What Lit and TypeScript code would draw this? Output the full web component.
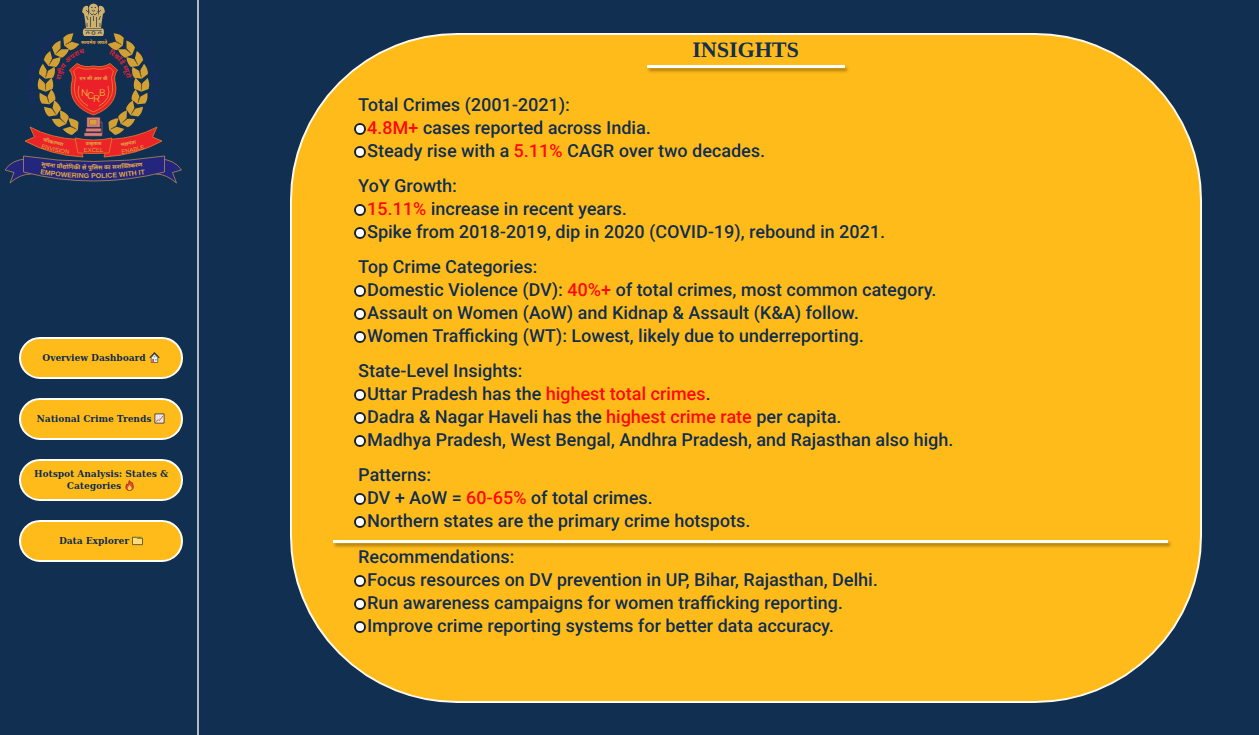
import { LitElement, html, css, svg } from "lit";
import { customElement } from "lit/decorators.js";

type Part = string | { hot: string };
interface Section { title: string; items: Part[][]; }

const hot = (text: string) => ({ hot: text });

const FINDINGS: Section[] = [
  { title: "Total Crimes (2001-2021):", items: [
    [hot("4.8M+"), " cases reported across India."],
    ["Steady rise with a ", hot("5.11%"), " CAGR over two decades."],
  ] },
  { title: "YoY Growth:", items: [
    [hot("15.11%"), " increase in recent years."],
    ["Spike from 2018-2019, dip in 2020 (COVID-19), rebound in 2021."],
  ] },
  { title: "Top Crime Categories:", items: [
    ["Domestic Violence (DV): ", hot("40%+"), " of total crimes, most common category."],
    ["Assault on Women (AoW) and Kidnap & Assault (K&A) follow."],
    ["Women Trafficking (WT): Lowest, likely due to underreporting."],
  ] },
  { title: "State-Level Insights:", items: [
    ["Uttar Pradesh has the ", hot("highest total crimes"), "."],
    ["Dadra & Nagar Haveli has the ", hot("highest crime rate"), " per capita."],
    ["Madhya Pradesh, West Bengal, Andhra Pradesh, and Rajasthan also high."],
  ] },
  { title: "Patterns:", items: [
    ["DV + AoW = ", hot("60-65%"), " of total crimes."],
    ["Northern states are the primary crime hotspots."],
  ] },
];

const ADVICE: Section = { title: "Recommendations:", items: [
  ["Focus resources on DV prevention in UP, Bihar, Rajasthan, Delhi."],
  ["Run awareness campaigns for women trafficking reporting."],
  ["Improve crime reporting systems for better data accuracy."],
] };

const house = html`<svg class="icon" viewBox="0 0 12 12" aria-hidden="true">
  <path d="M2.5 6v5.5h7V6L6 2z" fill="#f1f1ee" stroke="#333" stroke-width=".7"/>
  <path d="M.8 6.4 6 1l5.200 5.400" fill="none" stroke="#333" stroke-width="1.300"/>
  <path d="M3.500 7.500h2v4h-2z" fill="#e0483e"/><path d="M6.700 7.500h1.800v1.800H6.700z" fill="#4fc3e8"/>
  <path d="M5.200 4.300h1.600v1.600H5.200z" fill="#4fc3e8"/></svg>`;

const chart = html`<svg class="icon" viewBox="0 0 12 12" aria-hidden="true">
  <path d="M1 1h10v10H1z" fill="#f7f3ee" stroke="#3c3c3c"/>
  <path d="M3.500 1.500v9M6 1.500v9M8.500 1.500v9M1.500 3.500h9M1.500 6h9M1.500 8.500h9" stroke="#d5ccc4" stroke-width=".5"/>
  <path d="M2 9.500 4.500 7.500 6 8l4-5" fill="none" stroke="#e2483d"/></svg>`;

const flame = html`<svg class="icon" viewBox="0 0 12 12" aria-hidden="true">
  <path d="M5.500.6C7.600 2.500 9 3.200 9.400 3.200 9 4.500 10.500 6 10.200 8c-.3 2.200-1.700 3.500-4 3.500S2 10 2 7.800C2 6 2.700 5.300 3 4.200l1 1C4.600 3.800 5.700 2.500 5.500.6z" fill="#f2452f" stroke="#4a1a12" stroke-width=".6"/>
  <path d="M6.200 5c0 1.500 2.300 2.300 2.200 4-.1 1.400-1 2.100-2.200 2.100S4 10.300 4 9c0-1.600 1.800-2.200 2.200-4z" fill="#ffd23e"/></svg>`;

const folder = html`<svg class="icon" viewBox="0 0 12 12" aria-hidden="true">
  <path d="M.5 10.500V2.500H5l.8 1h5.700v7z" fill="#ffdc7a" stroke="#3a3018" stroke-width=".8"/>
  <path d="M5.600 2h4.600v1H6z" fill="#3e8f4c"/></svg>`;

const PAGES = [
  { label: "Overview Dashboard", icon: house },
  { label: "National Crime Trends", icon: chart },
  { label: "Hotspot Analysis: States & Categories", icon: flame },
  { label: "Data Explorer", icon: folder },
];

/* One side of the laurel: nine leaf pairs along an arc around the shield. */
const laurel = Array.from({ length: 9 }, (_, i) => {
  const turn = -29 - i * 15.5;
  return svg`<g transform="rotate(${turn} 93.500 84) translate(93.500 36) rotate(90) scale(1.100 1)">
    <path d="M0 7 L-6.500 4 Q-8-1-5.500-7 L-.6-1.500Z M0 7 L6.500 4 Q8-1 5.500-7 L.6-1.500Z" fill="#d3a033"/>
    <path d="M0 5V-1" stroke="#7b6631" stroke-width=".7"/></g>`;
});

const lions = svg`<g fill="#cfb06c">
  <path d="M90 5q3.500-3 7 0l1.500 3-1 4 2 5v11H87.500V17l2-5-1-4z"/>
  <path d="M88 6q-3-1-5 2l-1 4 2 2 1 6 1 8h3zM99 6q3-1 5 2l1 4-2 2-1 6-1 8h-3z"/>
  <path d="M84 28.500h19q2 3 0 7.500H84q-2.500-4 0-7.500z"/></g>
  <g fill="none" stroke="#13304f" stroke-width=".7">
  <path d="M91 7.500h1.500M94.500 7.500H96M92 10.500q1.500 1 3 0M90 13l2 2 1.500-1 1.500 1 2-2M90.500 17v10M93.500 16v5M96.500 17v10M86 10l2 2M101 10l-2 2M86.500 16l1.500 4M100.500 16 99 20M87 23v4M100 23v4"/>
  <path d="M85 30.500h17" stroke-width=".5"/><circle cx="93.500" cy="33" r="1.600"/><path d="M86 34l1-2 2 0 0 2M98 34l1-2 2 0 0 2"/></g>`;

const crest = html`<svg class="crest" viewBox="0 0 186 190" role="img" aria-label="National Crime Records Bureau">
  <defs>
    <path id="outer-left" d="M36.100 102.500A60 60 0 0 1 69 30.200"/>
    <path id="outer-right" d="M123.500 33A60 60 0 0 1 150 105"/>
    <path id="inner-left" d="M60.500 80A33 33 0 0 1 84 53"/>
    <path id="inner-right" d="M108.500 54A33 33 0 0 1 125 94"/>
    <path id="banner-hindi" d="M41 166Q94 174 160 164"/>
    <path id="banner-latin" d="M40 174Q94 183 160 172"/>
    <path id="left-hindi" d="M43 141Q56 145.500 76 148"/>
    <path id="left-latin" d="M41 148Q54 152 76 155"/>
    <path id="right-hindi" d="M121 146Q133 145 148 140"/>
    <path id="right-latin" d="M122 154Q134 152 150 147"/>
  </defs>
  ${lions}
  <g class="gold mid"><text x="94" y="44" font-size="5" font-weight="700">सत्यमेव जयते</text></g>
  <g>${laurel}</g>
  <g transform="translate(187 0) scale(-1 1)">${laurel}</g>
  <g fill="#20286e">
    <text font-size="9"><textPath href="#outer-left">NATIONAL CRIME</textPath></text>
    <text font-size="8"><textPath href="#outer-right">RECORDS BUREAU</textPath></text>
  </g>
  <g fill="#d3243a" font-weight="700" font-size="7">
    <text><textPath href="#inner-left">राष्ट्रीय अपराध</textPath></text>
    <text><textPath href="#inner-right">रिकॉर्ड ब्यूरो</textPath></text>
  </g>
  <path d="M93.500 66Q84 68 77 63.500L69.500 70Q74 76 71.500 84C69 101 80 110 93.500 115C107 110 118 101 115.500 84Q113 76 117.500 70L110 63.500Q103 68 93.500 66Z" fill="#ec2028" stroke="#d98a2b" stroke-width=".8"/>
  <path d="M93.500 68.500Q84 70.500 78 67L73.500 71Q77 77 74.500 85C73 99 82 107 93.500 112C105 107 114 99 112.500 85Q110 77 113.500 71L109 67Q103 70.500 93.500 68.500Z" fill="none" stroke="#e8912e" stroke-width=".7"/>
  <path d="M79 86q-4 13 9 20M108 86q4 13-9 20" fill="none" stroke="#e8912e" stroke-width=".9"/>
  <g class="gold mid"><text x="93.500" y="80" font-size="5" font-weight="700">एन सी आर बी</text></g>
  <g class="monogram"><text x="81" y="96">N</text><text x="87" y="99">C</text><text x="93" y="102">R</text><text x="99" y="96">B</text></g>
  <g fill="#d88079" stroke="#9d4f55" stroke-width=".5">
    <path d="M87 117.500h13v9.500H87zM86 128.500h15v3H86zM84.500 133h17.500v3H84.500z"/>
    <path d="M89.500 119.500h7.500v5.500h-7.500z" fill="#d4a23a"/><path d="M100 122h2v12" fill="none" stroke="#d88079"/></g>
  <g stroke="#e1802c" stroke-width=".8" fill="#ec2427">
    <path d="M30 127Q50 138 78 139.500L83 157Q50 155 25 141L34.500 137Z"/>
    <path d="M157 127Q137 138 109 139.500L104 157Q137 155 162 141L152.500 137Z"/>
    <path d="M75 138Q93.500 142 112 138L109 153Q93.500 154 78 153Z"/></g>
  <g stroke="#b48a58" stroke-width=".8" fill="#23267c">
    <path d="M28 159Q12 159 5 170L14 172.500 10 183Q20 174 31 174Z"/>
    <path d="M159 159Q174 159 181.500 170L172.500 172.500 176.500 183Q166 174 156 174Z"/>
    <path d="M23.500 156Q93 167 164.500 156V172Q93 190 23.500 172Z"/></g>
  <g class="gold">
    <text font-size="6" font-weight="700"><textPath href="#banner-hindi">सूचना प्रौद्योगिकी से पुलिस का सशक्तिकरण</textPath></text>
    <text font-size="7" font-weight="700"><textPath href="#banner-latin">EMPOWERING POLICE WITH IT</textPath></text>
  </g>
  <g class="gold">
    <g font-size="5" font-weight="700"><text><textPath href="#left-hindi">परिकल्पना</textPath></text><text><textPath href="#right-hindi">सक्षमता</textPath></text>
    <text class="mid" x="93.500" y="144.500">उत्कृष्टता</text></g>
    <g font-size="6"><text><textPath href="#left-latin">ENVISION</textPath></text><text><textPath href="#right-latin">ENABLE</textPath></text>
    <text class="mid" x="93.500" y="151.500">EXCEL</text></g>
  </g>
</svg>`;

@customElement("app-root")
export class AppRoot extends LitElement {
  static styles = css`
    :host { display: flex; min-height: 100vh; background: #112f50; color: #12304f; text-rendering: geometricPrecision; }
    .sidebar { box-sizing: border-box; flex: none; width: 199px; border-right: 2px solid #b4bac2; }
    .crest { display: block; width: 186px; height: 190px; font-family: "Liberation Sans", "Noto Sans Devanagari", sans-serif; }
    .gold { fill: #dca548; }
    .mid { text-anchor: middle; }
    .monogram { fill: #e9a33a; font-family: "Liberation Sans Narrow", "Liberation Sans", sans-serif; font-size: 10px; }
    .nav { display: flex; flex-direction: column; gap: 19px; padding: 147px 14px 24px 19px; }
    .page {
      box-sizing: border-box; height: 42px; padding: 0 10px 1px; border: 2px solid #fff; border-radius: 21px;
      background: #ffbb1a; color: #12304f; font: 700 9px/12px "DejaVu Serif", serif; text-align: center; cursor: pointer;
    }
    .icon { width: 11px; height: 11px; vertical-align: -2px; }
    .main { flex: 1; display: flex; padding: 33px 57px 32px 91px; }
    .panel {
      box-sizing: border-box; flex: 1; border: 2px solid #fffaf0; border-radius: 167px; background: #ffbb1a;
      padding: 2px 32px 60px 41px; font: 500 18px/23px Roboto, sans-serif;
    }
    .top { padding-right: 10px; }
    .title { margin: 0; text-align: center; font: 700 22px/25px "Liberation Serif", serif; }
    .bar { height: 3px; border: 0; background: #fff; box-shadow: 2px 3px 3px rgba(90, 60, 0, .5); }
    .short { width: 198px; margin: 3px auto 26px; }
    .long { margin: 7px 0 3px; }
    .findings { display: flex; flex-direction: column; gap: 12px; }
    .section { padding-left: 21px; }
    .heading { margin: 0; padding-left: 4px; font: inherit; }
    .list { margin: 0; padding: 0; list-style: none; }
    .item { display: flex; align-items: center; gap: 1px; }
    .dot { box-sizing: border-box; flex: none; width: 12px; height: 12px; border: 2px solid #16202c; border-radius: 50%; background: #fff; }
    .hot { color: #ff0a0a; }
  `;

  private section(s: Section) {
    return html`<section class="section">
      <h2 class="heading">${s.title}</h2>
      <ul class="list">${s.items.map((parts) => html`<li class="item"><span class="dot"></span><span>${parts.map((p) =>
        typeof p === "string" ? p : html`<span class="hot">${p.hot}</span>`)}</span></li>`)}</ul>
    </section>`;
  }

  render() {
    return html`
      <aside class="sidebar">
        ${crest}
        <nav class="nav">${PAGES.map((p) => html`<button class="page" type="button">${p.label} ${p.icon}</button>`)}</nav>
      </aside>
      <main class="main">
        <article class="panel">
          <header class="top">
            <h1 class="title">INSIGHTS</h1>
            <hr class="bar short">
          </header>
          <div class="findings">${FINDINGS.map((s) => this.section(s))}</div>
          <hr class="bar long">
          ${this.section(ADVICE)}
        </article>
      </main>`;
  }
}
